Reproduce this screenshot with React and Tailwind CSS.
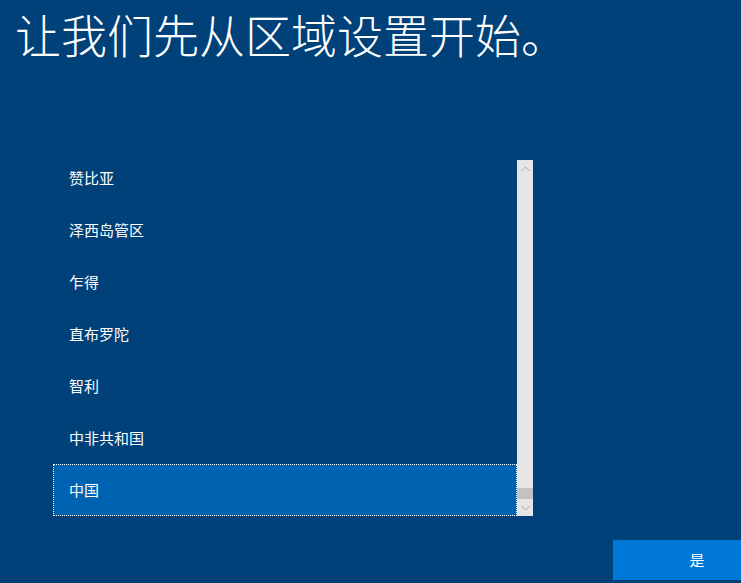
const regions = ['赞比亚', '泽西岛管区', '乍得', '直布罗陀', '智利', '中非共和国', '中国'];

export default function App() {
  const selected = '中国';

  return (
    <div
      className="w-[741px] h-[583px] bg-[#00417a] text-white overflow-hidden flex flex-col"
      style={{ fontFamily: '"Noto Sans CJK SC", "Noto Sans", sans-serif' }}
    >
      {/* Title */}
      <h1 className="pl-[15px] text-[46px] leading-[67px] font-light whitespace-nowrap">
        让我们先从区域设置开始。
      </h1>

      {/* Region list */}
      <div className="mt-[93px] ml-[53px] w-[480px] h-[356px] flex">
        <div className="flex-1 overflow-hidden">
          <div className="-mt-[8px]">
            {regions.map((r) => (
              <div
                key={r}
                className={`h-[52px] flex items-center text-[15px] ${
                  r === selected ? 'bg-[#0063b1] border border-dotted border-white pl-[15px]' : 'pl-[16px]'
                }`}
              >
                {r}
              </div>
            ))}
          </div>
        </div>

        {/* Scrollbar */}
        <div className="w-[16px] bg-[#e6e6e6] flex flex-col">
          <div className="h-[17px] flex items-center justify-center">
            <svg width="9" height="6" viewBox="0 0 9 6">
              <path d="M0.5 5 L4.5 1 L8.5 5" fill="none" stroke="#a6a6a6" strokeWidth="1" />
            </svg>
          </div>
          <div className="flex-1 flex flex-col justify-end">
            <div className="h-[11px] bg-[#c2c2c2]" />
          </div>
          <div className="h-[17px] flex items-center justify-center">
            <svg width="9" height="6" viewBox="0 0 9 6">
              <path d="M0.5 1 L4.5 5 L8.5 1" fill="none" stroke="#a6a6a6" strokeWidth="1" />
            </svg>
          </div>
        </div>
      </div>

      {/* Footer button */}
      <div className="mt-[24px] flex justify-end">
        <button className="w-[128px] h-[40px] bg-[#0078d7] text-white text-[15px] pl-[40px] flex items-center justify-center">
          是
        </button>
      </div>
    </div>
  );
}
